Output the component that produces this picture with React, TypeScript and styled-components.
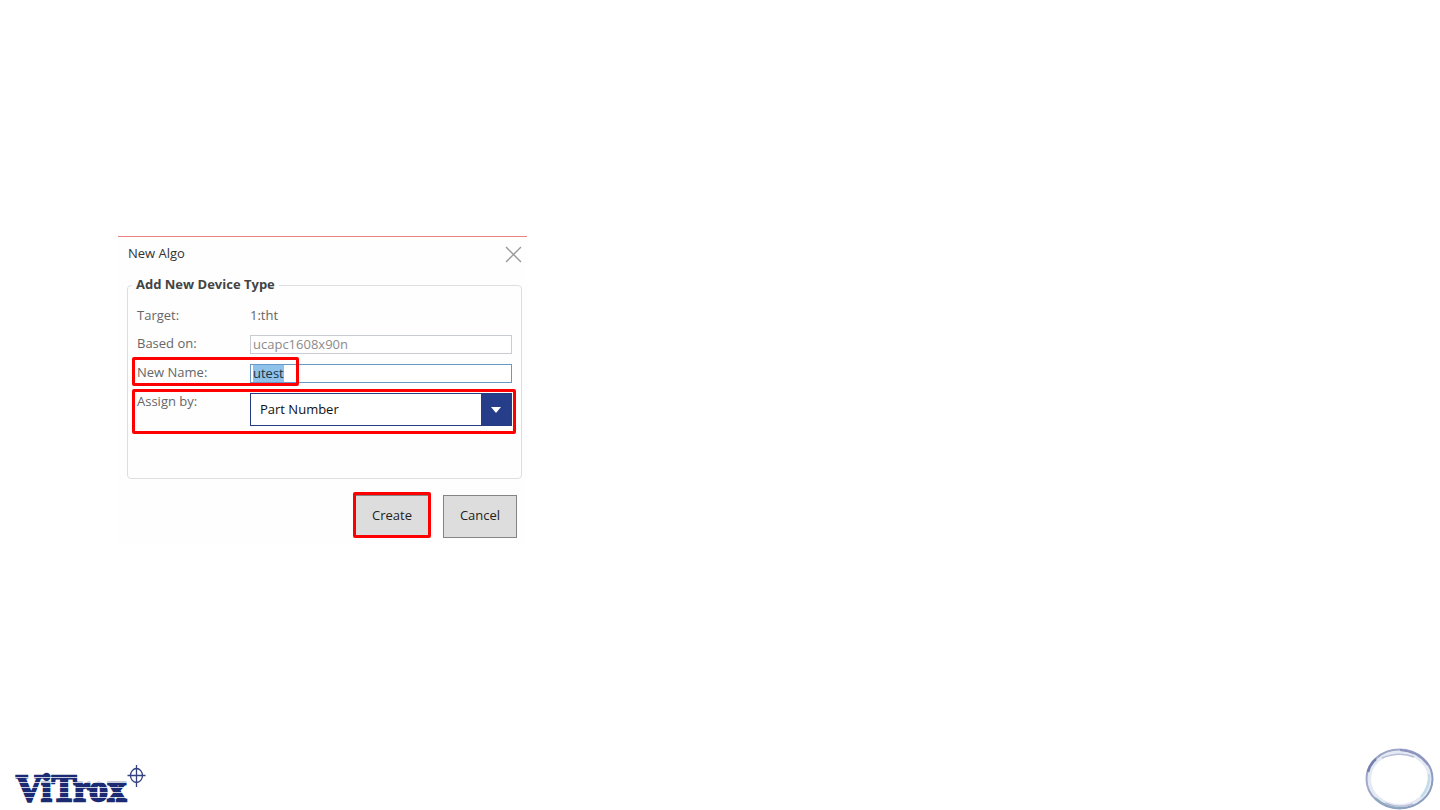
import React, { useEffect, useRef } from "react";
import styled, { createGlobalStyle, css } from "styled-components";

const GlobalStyle = createGlobalStyle`
  *, *::before, *::after { box-sizing: border-box; }
  body {
    margin: 0;
    background: #fff;
    font-family: "Open Sans", "Noto Sans", sans-serif;
    font-size: 13px;
    line-height: 16px;
  }
  button, input, select { font: inherit; margin: 0; }
`;

const Slide = styled.div`
  min-height: 100vh;
  display: flex;
  flex-direction: column;
  justify-content: space-between;
`;

const Stage = styled.main`
  padding: 236px 24px 24px 118px;
`;

const Dialog = styled.form`
  width: 100%;
  max-width: 409px;
  padding: 0 5px 6px 9px;
  border-top: 1px solid #e98280;
  background: #fefefe;
`;

const TitleBar = styled.header`
  display: flex;
  justify-content: space-between;
  align-items: center;
  height: 34px;
  padding-left: 1px;
`;

const Title = styled.h1`
  margin: 0;
  padding-bottom: 2px;
  font-size: 13px;
  font-weight: 400;
  color: #333;
`;

const CloseButton = styled.button`
  display: flex;
  padding: 0;
  border: 0;
  background: none;
`;

const Group = styled.fieldset`
  display: flex;
  flex-direction: column;
  gap: 10px;
  min-width: 0;
  margin: 5px 0 0;
  padding: 13px 9px 52px;
  border: 1px solid #dbdfe2;
  border-radius: 4px;
`;

const Legend = styled.legend`
  margin-left: -5px;
  padding: 0 4px 2px;
  font-weight: 700;
  color: #444;
`;

const Field = styled.div`
  position: relative;
  display: grid;
  grid-template-columns: 113px 1fr;
  align-items: start;
  min-height: 18px;
  color: #666;
`;

const TextBox = styled.input`
  width: 100%;
  height: 19px;
  padding: 0 2px 1px;
  border: 1px solid #6798c8;
  background: #fff;
  color: #333;
  outline: none;

  &:disabled {
    border-color: #c8ccd2;
    color: #8b8b8b;
  }
  &::selection {
    background: #8ec2ea;
    color: #234;
  }
`;

const SelectBox = styled.div`
  display: grid;
  grid-template-columns: 1fr 30px;
  height: 33px;
  border: 1px solid #263b80;
  background: #263e8a;
`;

const Select = styled.select`
  grid-area: 1 / 1;
  appearance: none;
  width: 100%;
  padding: 0 9px 2px;
  border: 0;
  border-radius: 0;
  background: #fff;
  color: #111;
  outline: none;
`;

const Arrow = styled.svg`
  place-self: center;
`;

const Highlight = styled.span<{ $area: "name" | "assign" | "create" }>`
  position: absolute;
  border: 3px solid #fe0000;
  border-radius: 2px;
  pointer-events: none;
  ${({ $area }) =>
    $area === "name"
      ? css`top: -7px; bottom: -3px; left: -5px; width: 167px;`
      : $area === "assign"
        ? css`top: -4px; bottom: -8px; left: -5px; right: -4px;`
        : css`inset: -3px -2px 0;`}
`;

const Actions = styled.footer`
  display: flex;
  justify-content: flex-end;
  gap: 14px;
  padding: 16px 5px 0 0;
`;

const ActionSlot = styled.div`
  position: relative;
`;

const ActionButton = styled.button`
  display: block;
  width: 74px;
  height: 43px;
  padding: 0 0 3px;
  border: 1px solid #858585;
  background: #ddd;
  color: #222;
`;

const SlideFooter = styled.footer`
  display: flex;
  justify-content: space-between;
  align-items: flex-end;
  padding: 0 6px 0 14px;
`;

const Logo = () => (
  <svg width="134" height="48" viewBox="0 0 134 48" role="img" aria-label="ViTrox">
    <text
      x="2"
      y="39"
      fontFamily="Liberation Serif, serif"
      fontWeight="700"
      fontSize="37"
      fill="#1b2b73"
      stroke="#1b2b73"
      strokeWidth="2.4"
    >
      ViTrox
    </text>
    <path
      d="M0 15.5H118M0 20.5H118M0 25.5H118M0 30.5H118M0 35.5H118"
      stroke="#fff"
      strokeWidth="1"
      opacity="0.75"
    />
    <g fill="none" stroke="#33427f" strokeWidth="1.3">
      <ellipse cx="122.5" cy="13.5" rx="6" ry="7" />
      <path d="M113.5 13.5H131.5M122.5 3V25" />
    </g>
  </svg>
);

const Ring = () => (
  <svg width="69" height="62" viewBox="0 0 69 62" aria-hidden="true">
    <defs>
      <linearGradient id="rim" x1="0" y1="0" x2="1" y2="1">
        <stop offset="0" stopColor="#8d98be" />
        <stop offset="0.3" stopColor="#a5adcb" />
        <stop offset="0.65" stopColor="#8f9bc4" />
        <stop offset="1" stopColor="#849eb6" />
      </linearGradient>
    </defs>
    <ellipse cx="34.5" cy="31" rx="31" ry="27.5" fill="none" stroke="#e4e9f4" strokeWidth="5" />
    <ellipse cx="34.5" cy="31" rx="33" ry="29.5" fill="none" stroke="url(#rim)" strokeWidth="2" />
    <path d="M3 24Q5 16 11 11" fill="none" stroke="#7580ae" strokeWidth="2.5" />
    <path d="M35 2Q53 3 63 17" fill="none" stroke="#8c94bd" strokeWidth="2" />
    <path d="M64 26Q65 39 56 49" fill="none" stroke="#c3dcea" strokeWidth="2.5" />
    <path d="M10 50Q21 60 38 60" fill="none" stroke="#8daabd" strokeWidth="2" />
    <path d="M17 10Q34 3 49 9M20 55Q34 61 48 56" fill="none" stroke="#b8bed8" strokeWidth="1.5" />
  </svg>
);

export default function App() {
  const nameRef = useRef<HTMLInputElement>(null);

  useEffect(() => {
    nameRef.current?.focus();
    nameRef.current?.select();
  }, []);

  return (
    <>
      <GlobalStyle />
      <Slide>
        <Stage>
          <Dialog onSubmit={(e) => e.preventDefault()}>
            <TitleBar>
              <Title>New Algo</Title>
              <CloseButton type="button" aria-label="Close">
                <svg width="17" height="17" viewBox="0 0 17 17" stroke="#999" strokeWidth="1.4">
                  <path d="M1 1L16 16M16 1L1 16" />
                </svg>
              </CloseButton>
            </TitleBar>
            <Group>
              <Legend>Add New Device Type</Legend>
              <Field>
                <span>Target:</span>
                <span>1:tht</span>
              </Field>
              <Field>
                <label htmlFor="base">Based on:</label>
                <TextBox id="base" defaultValue="ucapc1608x90n" disabled />
              </Field>
              <Field>
                <label htmlFor="name">New Name:</label>
                <TextBox id="name" ref={nameRef} defaultValue="utest" spellCheck={false} />
                <Highlight $area="name" />
              </Field>
              <Field>
                <label htmlFor="assign">Assign by:</label>
                <SelectBox>
                  <Select id="assign" defaultValue="part">
                    <option value="part">Part Number</option>
                  </Select>
                  <Arrow width="10" height="6" viewBox="0 0 10 6" fill="#fff" aria-hidden="true">
                    <path d="M0 0H10L5 6Z" />
                  </Arrow>
                </SelectBox>
                <Highlight $area="assign" />
              </Field>
            </Group>
            <Actions>
              <ActionSlot>
                <ActionButton type="submit">Create</ActionButton>
                <Highlight $area="create" />
              </ActionSlot>
              <ActionSlot>
                <ActionButton type="button">Cancel</ActionButton>
              </ActionSlot>
            </Actions>
          </Dialog>
        </Stage>
        <SlideFooter>
          <Logo />
          <Ring />
        </SlideFooter>
      </Slide>
    </>
  );
}
